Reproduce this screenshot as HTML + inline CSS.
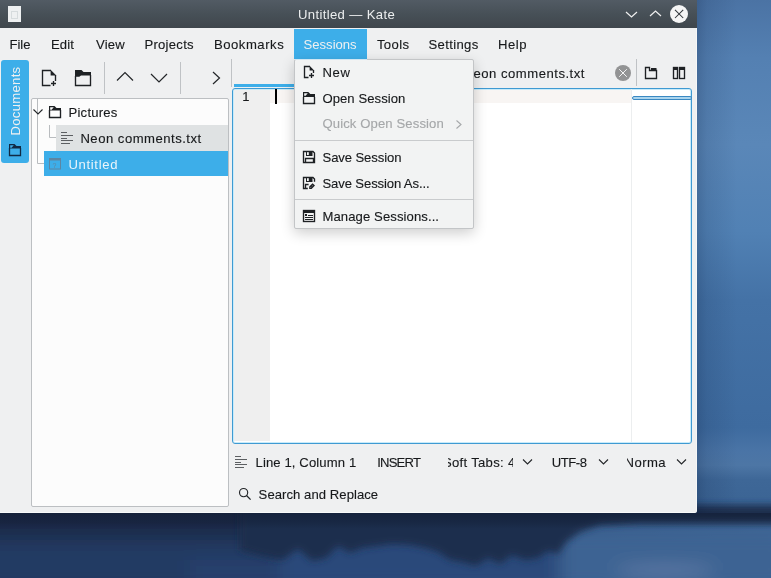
<!DOCTYPE html>
<html><head><meta charset="utf-8">
<style>
html,body{margin:0;padding:0;}
body{width:771px;height:578px;overflow:hidden;position:relative;font-family:"Liberation Sans",sans-serif;font-size:13px;color:#17191b;background:#3f6593;}
.a{position:absolute;}
.t{position:absolute;white-space:nowrap;line-height:16px;font-size:13px;-webkit-text-stroke:0.12px currentColor;}
svg{position:absolute;overflow:visible;}
#desk-r{left:697px;top:0;width:74px;height:513px;background:linear-gradient(180deg,#3a5a86 0%,#4d77a7 12%,#5a87b8 30%,#5683b4 45%,#4a73a3 65%,#406895 85%,#3a5f8c 100%);}
#desk-b{left:0;top:513px;width:771px;height:65px;background:linear-gradient(180deg,#1e2c48 0%,#223557 40%,#2c4b78 100%);}
#win{left:0;top:0;width:697px;height:513px;background:#eff0f1;overflow:hidden;will-change:transform;border-radius:0 0 3px 0;}
#title{left:0;top:0;width:697px;height:28px;background:linear-gradient(180deg,#525b64 0%,#475057 50%,#3f464c 100%);}
.sep{position:absolute;width:1px;background:#bfc2c5;}
</style></head>
<body>
<svg class="a" style="left:0;top:0" width="771" height="578">
  <defs>
    <linearGradient id="gr" x1="0" y1="0" x2="0" y2="1">
      <stop offset="0" stop-color="#4b73a4"/>
      <stop offset="0.1" stop-color="#5480b2"/>
      <stop offset="0.25" stop-color="#5a87b8"/>
      <stop offset="0.4" stop-color="#5181b4"/>
      <stop offset="0.52" stop-color="#4472a6"/>
      <stop offset="0.74" stop-color="#3e6b9f"/>
      <stop offset="0.78" stop-color="#4a74a6"/>
      <stop offset="0.805" stop-color="#4d76a5"/>
      <stop offset="0.83" stop-color="#3e6797"/>
      <stop offset="0.88" stop-color="#3b6494"/>
      <stop offset="1" stop-color="#3b6291"/>
    </linearGradient>
    <linearGradient id="gb" x1="0" y1="0" x2="1" y2="0">
      <stop offset="0" stop-color="#1f2d4c"/>
      <stop offset="0.3" stop-color="#22365c"/>
      <stop offset="0.5" stop-color="#2b4a78"/>
      <stop offset="0.75" stop-color="#375b8b"/>
      <stop offset="1" stop-color="#3f6696"/>
    </linearGradient>
    <filter id="bl" x="-20%" y="-50%" width="140%" height="200%"><feGaussianBlur stdDeviation="9"/></filter>
    <filter id="bl2" x="-20%" y="-50%" width="140%" height="200%"><feGaussianBlur stdDeviation="3.5"/></filter>
    <linearGradient id="sh" x1="0" y1="0" x2="1" y2="0">
      <stop offset="0" stop-color="#001030" stop-opacity="0.2"/>
      <stop offset="0.25" stop-color="#001030" stop-opacity="0.1"/>
      <stop offset="1" stop-color="#001030" stop-opacity="0"/>
    </linearGradient>
    <linearGradient id="shb" x1="0" y1="0" x2="0" y2="1">
      <stop offset="0" stop-color="#0a1020" stop-opacity="0.45"/>
      <stop offset="0.6" stop-color="#0a1020" stop-opacity="0.25"/>
      <stop offset="1" stop-color="#0a1020" stop-opacity="0"/>
    </linearGradient>
  </defs>
  <rect x="0" y="0" width="771" height="578" fill="url(#gr)"/>
  <rect x="0" y="513" width="771" height="65" fill="url(#gb)"/>
  <g filter="url(#bl)">
    <rect x="-20" y="500" width="300" height="40" fill="#1e2b49"/>
    <rect x="-20" y="540" width="300" height="50" fill="#233a63"/>
    <rect x="190" y="560" width="100" height="30" fill="#26416d"/>
    <rect x="280" y="530" width="300" height="60" fill="#2b4a7a"/>
    <rect x="560" y="530" width="230" height="60" fill="#3c6393"/>
    <ellipse cx="665" cy="571" rx="50" ry="5" fill="#647ea8"/>
  </g>
  <g filter="url(#bl2)">
    <path d="M240,505 H790 V523 H640 L600,525 L580,532 L566,542 L558,554 L548,551 L538,558 L525,560 L512,555 L500,564 L488,558 L476,566 L462,562 L450,560 L438,552 L425,548 L410,545 L392,544 L378,546 L362,548 L350,553 L338,546 L326,558 L312,561 L298,549 L282,560 L262,556 L240,550 Z" fill="#1f2e4d"/>
  </g>
  <rect x="0" y="513" width="771" height="16" fill="url(#shb)" opacity="0.8"/>
  <rect x="697" y="0" width="40" height="513" fill="url(#sh)"/>
</svg>
<div class="a" id="win">
  <!-- title bar -->
  <div class="a" id="title"></div>
  <div class="a" style="left:7.5px;top:6px;width:13px;height:16px;background:#eef0f1;"></div>
  <div class="a" style="left:10.5px;top:11px;width:5px;height:6px;border:1px solid #cfd6d8;opacity:0.8"></div>
  <div class="t" style="left:298.0px;top:7px;font-size:13.1px;letter-spacing:0.357px;color:#eceeef;-webkit-text-stroke:0;">Untitled — Kate</div>
  <svg style="left:0;top:0" width="697" height="28">
    <polyline points="626,12 631.5,17 637,12" fill="none" stroke="#f0f0f0" stroke-width="1.2"/>
    <polyline points="650,16 655.5,11 661,16" fill="none" stroke="#f0f0f0" stroke-width="1.2"/>
    <circle cx="679" cy="14" r="9" fill="#f5f5f5"/>
    <path d="M675,9.8 L683.2,18 M683.2,9.8 L675,18" stroke="#31363b" stroke-width="1.05"/>
  </svg>

  <!-- menu bar -->
  <div class="a" style="left:294px;top:29px;width:73px;height:30px;background:#3daee9;"></div>
  <div class="t" style="left:9.5px;top:37px;font-size:13.1px;letter-spacing:-0.033px;">File</div>
  <div class="t" style="left:51.0px;top:37px;font-size:13.1px;letter-spacing:0.067px;">Edit</div>
  <div class="t" style="left:96.1px;top:37px;font-size:13.1px;letter-spacing:0.133px;">View</div>
  <div class="t" style="left:144.4px;top:37px;font-size:13.1px;letter-spacing:0.271px;">Projects</div>
  <div class="t" style="left:213.9px;top:37px;font-size:13.1px;letter-spacing:0.537px;">Bookmarks</div>
  <div class="t" style="left:303.6px;top:37px;font-size:13.1px;letter-spacing:-0.014px;color:#eff0f1;-webkit-text-stroke:0;">Sessions</div>
  <div class="t" style="left:376.9px;top:37px;font-size:13.1px;letter-spacing:0.375px;">Tools</div>
  <div class="t" style="left:428.4px;top:37px;font-size:13.1px;letter-spacing:0.371px;">Settings</div>
  <div class="t" style="left:498.0px;top:37px;font-size:13.1px;letter-spacing:0.567px;">Help</div>

  <!-- left sidebar tab -->
  <div class="a" style="left:1px;top:60px;width:28px;height:103px;background:#3daee9;border-radius:3px;"></div>
  <div class="t" style="left:16px;top:101px;color:#eff0f1;font-size:13.1px;letter-spacing:0.3px;-webkit-text-stroke:0;transform:translate(-50%,-50%) rotate(-90deg);line-height:16px;">Documents</div>
  <svg style="left:0;top:0" width="40" height="170">
    <path d="M9,144 H14.5 L16.5,146 H21 V148.6 H9 Z" fill="#102a45"/>
    <path d="M10.2,145.2 H13.8 L11.6,147.8 H10.2 Z" fill="#3daee9"/>
    <path d="M9.5,148 V155.5 H20.5 V148" fill="none" stroke="#102a45" stroke-width="1.3"/>
  </svg>

  <!-- toolbar -->
  <svg style="left:0;top:0" width="240" height="98">
    <!-- new doc -->
    <path d="M50.5,85.5 H42.5 V70.5 H51" fill="none" stroke="#1e2124" stroke-width="1.35"/>
    <path d="M50.6,69.8 L56.3,75.5 L50.6,75.5 Z" fill="#1e2124"/>
    <path d="M55.5,75 V81" fill="none" stroke="#1e2124" stroke-width="1.35"/>
    <path d="M53.5,81 V86 M51,83.5 H56" fill="none" stroke="#1e2124" stroke-width="1.35"/>
    <!-- folder -->
    <path d="M75,70 H81.5 L83.5,72 H91 V75.5 H81 L79.3,76.7 H75 Z" fill="#1e2124"/>
    <path d="M75.5,76 V85.5 H90.5 V75" fill="none" stroke="#1e2124" stroke-width="1.35"/>
    <!-- separators -->
    <rect x="104" y="62" width="1" height="32" fill="#bfc2c5"/>
    <rect x="180" y="62" width="1" height="32" fill="#bfc2c5"/>
    <rect x="231" y="59" width="1" height="28" fill="#bfc2c5"/>
    <!-- arrows -->
    <polyline points="117,80.5 125,72.5 133,80.5" fill="none" stroke="#232629" stroke-width="1.2"/>
    <polyline points="151,74 159,82 167,74" fill="none" stroke="#232629" stroke-width="1.2"/>
    <polyline points="213,72 219.5,78 213,84" fill="none" stroke="#232629" stroke-width="1.2"/>
  </svg>

  <!-- tree view -->
  <div class="a" style="left:31px;top:98px;width:196px;height:407px;background:#fcfcfc;border:1px solid #bcbfc2;border-radius:2px;"></div>
  <div class="a" style="left:56px;top:125px;width:172px;height:26px;background:#dfe2e3;"></div>
  <div class="a" style="left:44px;top:150.8px;width:184px;height:25.7px;background:#3daee9;"></div>
  <svg style="left:0;top:0" width="240" height="180">
    <path d="M37.5,99 V163.5 H44" fill="none" stroke="#b9bcbf" stroke-width="1"/>
    <path d="M49.5,125 V137.5 H56" fill="none" stroke="#b9bcbf" stroke-width="1"/>
    <polyline points="33.5,109.5 38,114 42.5,109.5" fill="none" stroke="#232629" stroke-width="1.1"/>
    <!-- folder -->
    <path d="M49,106 H54.5 L56.5,108 H61 V110.6 H49 Z" fill="#1e2124"/>
    <path d="M50.2,107.2 H53.8 L51.6,109.8 H50.2 Z" fill="#fcfcfc"/>
    <path d="M49.5,110 V117.5 H60.5 V110" fill="none" stroke="#1e2124" stroke-width="1.35"/>
    <!-- text lines icon -->
    <g fill="#5c5f62">
      <rect x="61" y="132" width="6" height="1"/><rect x="61" y="135" width="12" height="1"/><rect x="61" y="138" width="6" height="1"/><rect x="61" y="140" width="12" height="1"/><rect x="61" y="143" width="9" height="1"/>
    </g>
    <!-- untitled icon -->
    <rect x="49.5" y="158.5" width="11" height="10.5" fill="none" stroke="#5d86a3" stroke-width="1"/>
    <rect x="49.5" y="158.5" width="11" height="2" fill="#5d86a3"/>
    <text x="52.5" y="167.5" font-size="7" fill="#5d86a3" font-family="Liberation Sans">?</text>
  </svg>
  <div class="t" style="left:68.5px;top:105px;font-size:13.1px;letter-spacing:0.229px;">Pictures</div>
  <div class="t" style="left:80.4px;top:131px;font-size:13.1px;letter-spacing:0.5px;">Neon comments.txt</div>
  <div class="t" style="left:68.4px;top:157px;font-size:13.1px;letter-spacing:0.671px;color:#eaf5fb;-webkit-text-stroke:0;">Untitled</div>

  <!-- tab bar -->
  <div class="a" style="left:234px;top:84px;width:240px;height:3px;background:#3daee9;"></div>
  <div class="t" style="left:463.6px;top:66px;font-size:13.1px;letter-spacing:0.5px;">Neon comments.txt</div>
  <svg style="left:0;top:0" width="697" height="98">
    <circle cx="623" cy="73" r="8" fill="#929394"/>
    <path d="M619.2,69.2 L626.8,76.8 M626.8,69.2 L619.2,76.8" stroke="#f4f4f4" stroke-width="1"/>
    <rect x="636" y="59" width="1" height="27" fill="#bfc2c5"/>
    <path d="M645.5,78.5 V67.5 H649.5 V70.5 H656.5 V78.5 Z" fill="none" stroke="#1e2124" stroke-width="1.35"/>
    <rect x="651" y="68" width="5.5" height="2.5" fill="#1e2124"/>
    <rect x="673.5" y="67.5" width="4" height="11" fill="none" stroke="#1e2124" stroke-width="1.35"/>
    <rect x="679.5" y="67.5" width="5" height="11" fill="none" stroke="#1e2124" stroke-width="1.35"/>
    <rect x="673" y="67" width="5" height="3" fill="#1e2124"/>
    <rect x="679" y="67" width="6" height="3" fill="#1e2124"/>
  </svg>

  <!-- editor -->
  <div class="a" style="left:232px;top:88px;width:458px;height:354px;border:1px solid #3f9ad2;border-radius:3px;background:#ffffff;box-shadow:inset 0 0 0 1px #c8ebfa;"></div>
  <div class="a" style="left:234px;top:90px;width:36px;height:351px;background:#efefef;"></div>
  <div class="a" style="left:270px;top:90px;width:362px;height:13px;background:#f8f5f3;"></div>
  <div class="a" style="left:631px;top:89px;width:1px;height:353px;background:#eceeef;"></div>
  <div class="a" style="left:632px;top:96px;width:58px;height:2px;border:1px solid #3a88c2;border-radius:2px;background:#a9d4ee;"></div>
  <div class="t" style="left:242.3px;top:89px;font-size:13px;">1</div>
  <div class="a" style="left:275px;top:89px;width:2px;height:15px;background:#000;"></div>

  <!-- status bar -->
  <svg style="left:0;top:0" width="697" height="513">
    <g fill="#5c5f62">
      <rect x="235" y="456" width="6" height="1"/><rect x="235" y="459" width="12" height="1"/><rect x="235" y="462" width="6" height="1"/><rect x="235" y="464" width="12" height="1"/><rect x="235" y="467" width="9" height="1"/>
    </g>
    <circle cx="243.6" cy="492.6" r="4.1" fill="none" stroke="#232629" stroke-width="1.15"/>
    <path d="M246.5,495.5 L250.6,499.6" stroke="#232629" stroke-width="1.3"/>
    <polyline points="523,459.5 527.5,464 532,459.5" fill="none" stroke="#232629" stroke-width="1.1"/>
    <polyline points="599,459.5 603.5,464 608,459.5" fill="none" stroke="#232629" stroke-width="1.1"/>
    <polyline points="677,459.5 681.5,464 686,459.5" fill="none" stroke="#232629" stroke-width="1.1"/>
  </svg>
  <div class="t" style="left:255.5px;top:455px;font-size:13.1px;letter-spacing:0.113px;">Line 1, Column 1</div>
  <div class="t" style="left:377.2px;top:455px;font-size:13.1px;letter-spacing:-0.8px;">INSERT</div>
  <div class="a" style="left:448px;top:450px;width:65px;height:22px;overflow:hidden;">
    <div class="t" style="left:-5px;top:5px;font-size:13.1px;letter-spacing:0.3px;">Soft Tabs: 4</div>
  </div>
  <div class="t" style="left:551.7px;top:455px;font-size:13.1px;letter-spacing:-0.45px;">UTF-8</div>
  <div class="a" style="left:627px;top:450px;width:39px;height:22px;overflow:hidden;">
    <div class="t" style="left:-2.4px;top:5px;font-size:13.1px;letter-spacing:0.4px;">Normal</div>
  </div>
  <div class="t" style="left:258.6px;top:487px;font-size:13.1px;letter-spacing:0.053px;">Search and Replace</div>

  <!-- popup menu -->
  <div class="a" style="left:294px;top:59px;width:178px;height:168px;background:#f2f3f3;border:1px solid #c3c5c7;border-radius:2px;box-shadow:0 4px 14px rgba(0,0,0,0.2);"></div>
  <div class="a" style="left:295px;top:59px;width:72px;height:1px;background:#cfe6f3;"></div>
  <div class="a" style="left:295px;top:140px;width:178px;height:1px;background:#c9cbcd;"></div>
  <div class="a" style="left:295px;top:199px;width:178px;height:1px;background:#c9cbcd;"></div>
  <svg style="left:0;top:0" width="697" height="240">
    <!-- new -->
    <path d="M308.5,77.5 H304.5 V66.5 H310" fill="none" stroke="#1e2124" stroke-width="1.35"/>
    <path d="M309.6,65.8 L314.2,70.5 L309.6,70.5 Z" fill="#1e2124"/>
    <path d="M313.5,70 V73" fill="none" stroke="#1e2124" stroke-width="1.35"/>
    <path d="M311.5,73 V78 M309,75.5 H314" fill="none" stroke="#1e2124" stroke-width="1.35"/>
    <!-- open -->
    <path d="M303,92 H308.3 L310.3,94 H315 V97 H303 Z" fill="#1e2124"/>
    <path d="M304.2,93.2 H307.8 L305.6,95.8 H304.2 Z" fill="#f2f3f3"/>
    <path d="M303.5,97 V103.5 H314.5 V97" fill="none" stroke="#1e2124" stroke-width="1.35"/>
    <!-- quick open chevron -->
    <polyline points="456.5,120.5 461,124.5 456.5,128.5" fill="none" stroke="#a5a7a9" stroke-width="1.1"/>
    <!-- save -->
    <path d="M303.5,162.5 V151.5 H313 L314.5,153 V162.5 Z" fill="none" stroke="#1e2124" stroke-width="1.35"/>
    <rect x="306" y="151" width="6.5" height="5" fill="#1e2124"/>
    <rect x="307" y="152.2" width="1.8" height="2.8" fill="#f2f3f3"/>
    <path d="M305.5,162.5 V158.5 H313.5 V162.5" fill="none" stroke="#1e2124" stroke-width="1.35"/>
    <!-- save as -->
    <path d="M307.8,188.5 H303.5 V177.5 H313 L314.5,179 V181.8" fill="none" stroke="#1e2124" stroke-width="1.35"/>
    <rect x="306" y="177" width="6.5" height="5" fill="#1e2124"/>
    <rect x="307" y="178.2" width="1.8" height="2.8" fill="#f2f3f3"/>
    <path d="M305.5,188.5 V184.5 H308.6" fill="none" stroke="#1e2124" stroke-width="1.35"/>
    <path d="M309.2,186.6 L312.6,183.2 L315,185.6 L311.6,189 H309.2 Z" fill="#1e2124"/>
    <path d="M310.6,187.6 L313.2,185" stroke="#f2f3f3" stroke-width="0.7" stroke-dasharray="0.9 0.9"/>
    <!-- manage -->
    <rect x="303.5" y="210.5" width="11" height="11" fill="none" stroke="#1e2124" stroke-width="1.35"/>
    <rect x="303" y="210" width="12" height="3" fill="#1e2124"/>
    <rect x="305" y="214" width="2" height="2" fill="#1e2124"/>
    <path d="M308,215.5 H313 M305,217.5 H313 M305,219.5 H313" stroke="#1e2124" stroke-width="1.1"/>
  </svg>
  <div class="t" style="left:322.4px;top:65px;font-size:13.1px;letter-spacing:0.7px;">New</div>
  <div class="t" style="left:322.4px;top:91px;font-size:13.1px;letter-spacing:0.064px;">Open Session</div>
  <div class="t" style="left:322.5px;top:116px;font-size:13.1px;letter-spacing:0.112px;color:#a5a7a9;">Quick Open Session</div>
  <div class="t" style="left:322.5px;top:150px;font-size:13.1px;letter-spacing:-0.1px;">Save Session</div>
  <div class="t" style="left:322.5px;top:176px;font-size:13.1px;letter-spacing:-0.124px;">Save Session As...</div>
  <div class="t" style="left:322.5px;top:209px;font-size:13.1px;letter-spacing:0.088px;">Manage Sessions...</div>
  <div class="a" style="left:0;top:512px;width:697px;height:1px;background:#f9fafa;"></div>
  <div class="a" style="left:696px;top:28px;width:1px;height:485px;background:#f6f7f7;"></div>
</div>
</body></html>
